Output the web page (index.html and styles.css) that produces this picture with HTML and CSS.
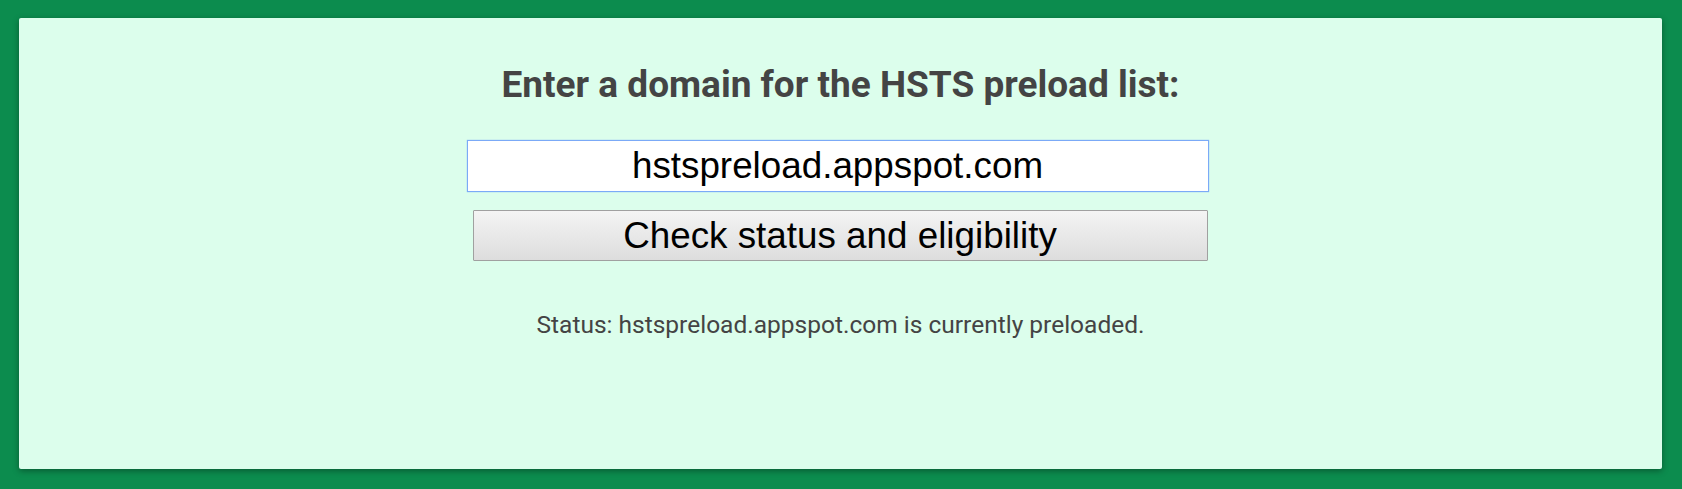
FILE: index.html
```html
<!DOCTYPE html>
<html lang="en">
<head>
  <meta charset="utf-8">
  <title>HSTS Preload List Submission</title>
  <link rel="stylesheet" href="styles.css">
</head>
<body>
  <main class="card">
    <h2 class="card-title">Enter a domain for the HSTS preload list:</h2>
    <form class="check-form">
      <input class="domain-input" type="text" value="hstspreload.appspot.com">
      <button class="check-button" type="button">Check status and eligibility</button>
    </form>
    <div class="status">Status: hstspreload.appspot.com is currently preloaded.</div>
  </main>
</body>
</html>
```

FILE: styles.css
```css
html, body {
  margin: 0;
  height: 100%;
}

body {
  background: #0c8c4e;
  font-family: Roboto, "Noto Sans", sans-serif;
  padding: 18px 20px 20px 19px;
  box-sizing: border-box;
}

.card {
  background: #dcfeec;
  border-radius: 2px;
  box-shadow: 0 2px 6px rgba(0, 0, 0, 0.35);
  height: 100%;
  box-sizing: border-box;
  padding-top: 45px;
  display: flex;
  flex-direction: column;
  align-items: center;
}

.card-title {
  margin: 0;
  font-size: 37px;
  font-weight: bold;
  color: #444;
  line-height: 44px;
}

.check-form {
  display: flex;
  flex-direction: column;
  align-items: center;
  margin: 33px 6px 0 0;
}

.domain-input {
  width: 742px;
  height: 52px;
  box-sizing: border-box;
  border: 1px solid #7baaf7;
  box-shadow: 0 0 1px #7baaf7;
  background: #fff;
  outline: none;
  padding: 0 4px;
  font-family: "Liberation Sans", Arial, sans-serif;
  font-size: 2.3em;
  text-align: center;
  color: #000;
}

.check-button {
  width: 735px;
  height: 51px;
  margin: 18px 0 0 5px;
  box-sizing: border-box;
  border: 1px solid #a0a0a0;
  border-radius: 1px;
  background: linear-gradient(#f4f4f4, #dddddd);
  font-family: "Liberation Sans", Arial, sans-serif;
  font-size: 2.3em;
  color: #000;
  padding: 0;
}

.status {
  margin-top: 49px;
  font-size: 24.5px;
  color: #444;
}
```
